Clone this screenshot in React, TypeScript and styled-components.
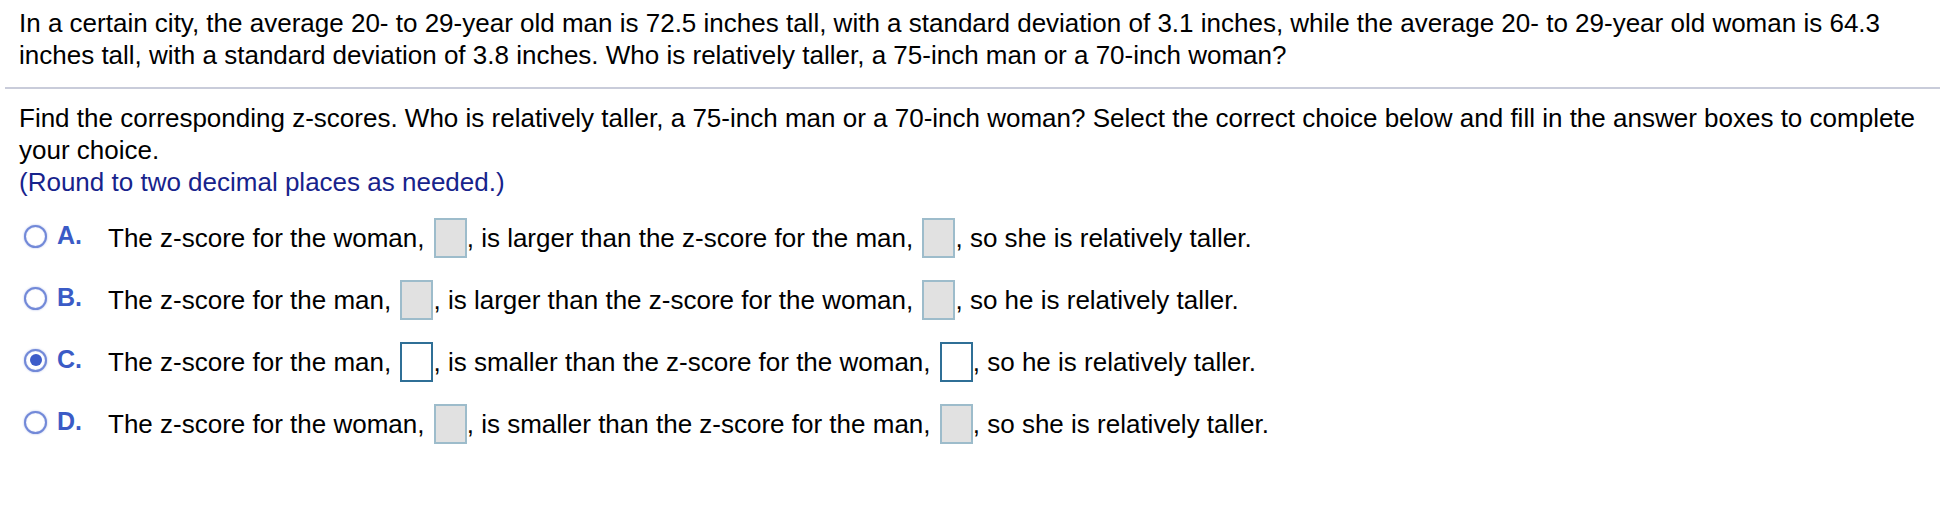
import styled, { createGlobalStyle } from 'styled-components';

const GlobalStyle = createGlobalStyle`
  body {
    margin: 0;
    background: #ffffff;
    font-family: "Liberation Sans", Arial, Helvetica, sans-serif;
    color: #000000;
  }
`;

type Choice = {
  letter: string;
  selected?: boolean;
  parts: [string, string, string];
};

const choices: Choice[] = [
  {
    letter: 'A.',
    parts: ['The z-score for the woman, ', ', is larger than the z-score for the man, ', ', so she is relatively taller.'],
  },
  {
    letter: 'B.',
    parts: ['The z-score for the man, ', ', is larger than the z-score for the woman, ', ', so he is relatively taller.'],
  },
  {
    letter: 'C.',
    selected: true,
    parts: ['The z-score for the man, ', ', is smaller than the z-score for the woman, ', ', so he is relatively taller.'],
  },
  {
    letter: 'D.',
    parts: ['The z-score for the woman, ', ', is smaller than the z-score for the man, ', ', so she is relatively taller.'],
  },
];

const App = () => {
  return (
    <Page>
      <GlobalStyle />
      <Question>
        In a certain city, the average 20- to 29-year old man is 72.5 inches tall, with a standard deviation of 3.1
        inches, while the average 20- to 29-year old woman is 64.3 inches tall, with a standard deviation of 3.8 inches.
        Who is relatively taller, a 75-inch man or a 70-inch woman?
      </Question>
      <Divider />
      <Prompt>
        Find the corresponding z-scores. Who is relatively taller, a 75-inch man or a 70-inch woman? Select the correct
        choice below and fill in the answer boxes to complete your choice.
        <Hint>(Round to two decimal places as needed.)</Hint>
      </Prompt>
      <ChoiceList>
        {choices.map((c) => (
          <ChoiceRow key={c.letter}>
            <Radio $checked={c.selected} />
            <Letter>{c.letter}</Letter>
            <ChoiceText>
              {c.parts[0]}
              <AnswerBox $active={c.selected} />
              {c.parts[1]}
              <AnswerBox $active={c.selected} />
              {c.parts[2]}
            </ChoiceText>
          </ChoiceRow>
        ))}
      </ChoiceList>
    </Page>
  );
};

export default App;

const Page = styled.div`
  width: 1940px;
  height: 520px;
  font-size: 26px;
  line-height: 32px;
`;

const Question = styled.div`
  padding: 7px 20px 0 19px;
`;

const Divider = styled.div`
  height: 2px;
  margin: 16px 0 0 5px;
  background-color: #c9ccda;
`;

const Prompt = styled.div`
  padding: 13px 20px 0 19px;
`;

const Hint = styled.div`
  color: #17238c;
`;

const ChoiceList = styled.div`
  display: flex;
  flex-direction: column;
  padding: 11px 0 0 24px;
`;

const ChoiceRow = styled.div`
  display: flex;
  align-items: center;
  height: 62px;
`;

const Radio = styled.span<{ $checked?: boolean }>`
  position: relative;
  box-sizing: border-box;
  width: 23px;
  height: 23px;
  margin-bottom: 8px;
  border-radius: 50%;
  border: 2px solid #7289d8;
  box-shadow: 0 0 2px rgba(90, 115, 210, 0.55), inset 0 0 1px rgba(90, 115, 210, 0.5);
  background: #ffffff;
  flex-shrink: 0;

  &::after {
    content: '';
    display: ${(props) => (props.$checked ? 'block' : 'none')};
    position: absolute;
    top: 3.5px;
    left: 3.5px;
    width: 12px;
    height: 12px;
    border-radius: 50%;
    background: #3d5cc9;
  }
`;

const Letter = styled.span`
  width: 51px;
  margin: 0 0 10px 10px;
  font-size: 25px;
  font-weight: bold;
  color: #3b5bc6;
`;

const ChoiceText = styled.span`
  white-space: nowrap;
`;

const AnswerBox = styled.span<{ $active?: boolean }>`
  display: inline-block;
  box-sizing: border-box;
  width: 33px;
  height: 40px;
  margin-left: 2px;
  vertical-align: middle;
  position: relative;
  top: -2px;
  border: 2px solid ${(props) => (props.$active ? '#2f6f96' : '#9dbccb')};
  background-color: ${(props) => (props.$active ? '#ffffff' : '#e1e1e1')};
`;
